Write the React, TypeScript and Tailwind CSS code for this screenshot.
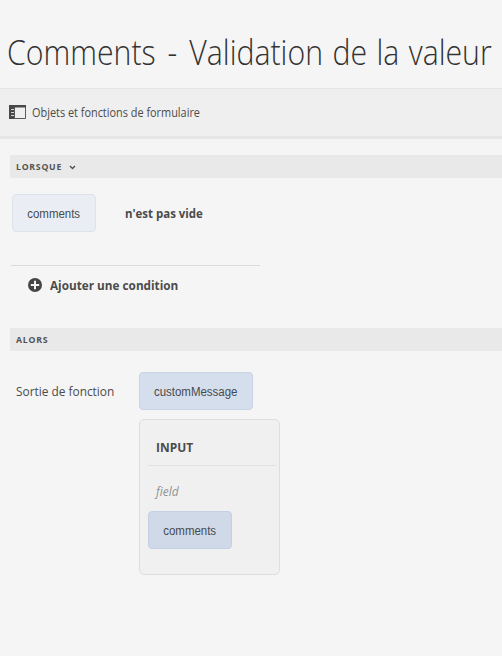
import type { ReactNode } from "react";

function Section({ children }: { children: ReactNode }) {
  return (
    <div className="ml-[10px] flex h-[23px] items-center bg-[#e9e9e9] pt-[2px] pl-[6px] text-[9.5px] font-bold tracking-[0.8px] text-[#535353]">
      {children}
    </div>
  );
}

function Chip({ children, tone }: { children: ReactNode; tone: string }) {
  return (
    <div className={`flex h-[38px] items-center justify-center rounded-[4px] border pt-px font-['Liberation_Sans',sans-serif] text-[12px] text-[#454a50] ${tone}`}>
      <span className="scale-x-[0.955]">{children}</span>
    </div>
  );
}

export default function App() {
  return (
    <main className="flex h-[656px] w-[502px] flex-col overflow-hidden bg-[#f5f5f5] font-['Open_Sans','Noto_Sans',sans-serif] text-[#4b4b4b]">
      <h1 className="h-[88px] w-[502px] pt-[28px] pl-[7px] text-[35px] leading-[48px] font-light whitespace-nowrap text-[#323232]">
        <span className="inline-block origin-left scale-x-[0.864] [word-spacing:1.8px]">
          <span className="[word-spacing:4.8px]">Comments - </span>Validation de la valeur
        </span>
      </h1>
      <div className="flex h-[51px] shrink-0 items-center border-t border-b-[3px] border-t-[#e5e5e5] border-b-[#e6e6e6] bg-[#efefef] pl-[9px]">
        <svg className="-mt-[2px]" width="17" height="14" viewBox="0 0 17 14" fill="none">
          <path d="M.5.5h16v13H.5z M5.5 1v12" stroke="#5a5a5a" />
          <path d="M0 0h17v2.5H0z M0 2h5v12H0z" fill="#484848" />
          <path d="M2 4.5h3M2 7.5h3M2 10.5h3" stroke="#d5d5d5" />
        </svg>
        <span className="ml-[6px] origin-left scale-x-[0.908] text-[12px]">Objets et fonctions de formulaire</span>
      </div>

      <div className="mt-[16px]">
        <Section>
          <span className="w-[53px] origin-left scale-x-[0.92]">LORSQUE</span>
          <svg width="7" height="5" viewBox="0 0 7 5" fill="none">
            <path d="M1 1l2.5 2.5L6 1" stroke="#4b4b4b" strokeWidth="1.3" />
          </svg>
        </Section>
      </div>
      <div className="mt-[16px] ml-[12px] flex items-center">
        <Chip tone="w-[84px] border-[#dde3ea] bg-[#eaeef4]">comments</Chip>
        <span className="mt-px ml-[29px] origin-left scale-x-[0.955] text-[12px] font-bold">n'est pas vide</span>
      </div>
      <div className="mt-[33px] ml-[11px] flex h-[40px] w-[249px] items-center border-t border-[#dadada] pl-[17px]">
        <svg className="-mt-px" width="14" height="14" viewBox="0 0 14 14">
          <circle cx="7" cy="7" r="7" fill="#454545" />
          <path d="M7 2.8v8.4M2.8 7h8.4" stroke="#f5f5f5" strokeWidth="2" />
        </svg>
        <span className="mt-px ml-[8px] origin-left scale-x-[0.94] text-[12.5px] font-bold whitespace-nowrap">Ajouter une condition</span>
      </div>

      <div className="mt-[23px]">
        <Section>
          <span className="origin-left scale-x-[0.92]">ALORS</span>
        </Section>
      </div>
      <div className="mt-[21px] flex">
        <div className="flex h-[38px] w-[139px] items-center pt-[2px] pl-[16px] text-[12.5px] whitespace-nowrap">
          <span className="origin-left scale-x-[0.95]">Sortie de fonction</span>
        </div>
        <div>
          <Chip tone="w-[114px] border-[#c8d3e5] bg-[#d5deec]">customMessage</Chip>
          <div className="mt-[9px] h-[156px] w-[141px] rounded-[5px] border border-[#dedede] bg-[#f0f0f0] pt-[17px] pl-[8px]">
            <div className="h-[29px] w-[128px] border-b border-[#e2e2e2] pl-[8px] text-[13px] leading-[20px] font-bold">
              <span className="inline-block origin-left scale-x-[0.92]">INPUT</span>
            </div>
            <div className="mt-[17px] mb-[10px] pl-[8px] text-[12px] leading-[18px] text-[#929292] italic">field</div>
            <Chip tone="w-[84px] border-[#c3d0e4] bg-[#cfd9e8]">comments</Chip>
          </div>
        </div>
      </div>
    </main>
  );
}
